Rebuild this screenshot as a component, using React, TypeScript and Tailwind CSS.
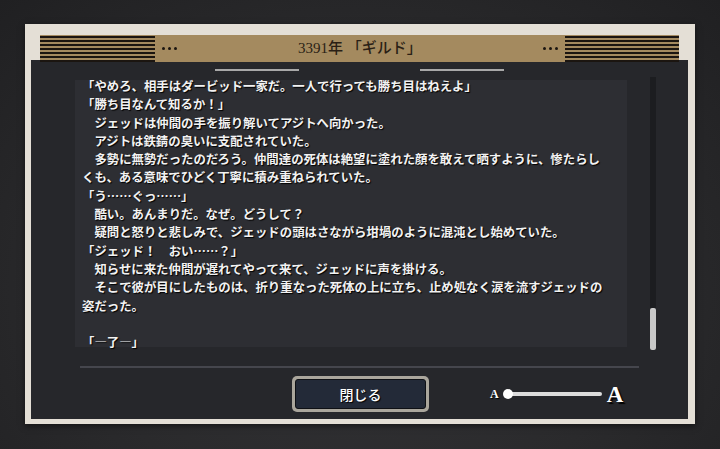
import React from "react";

const lines: string[] = [
  "「やめろ、相手はダービッド一家だ。一人で行っても勝ち目はねえよ」",
  "「勝ち目なんて知るか！」",
  "　ジェッドは仲間の手を振り解いてアジトへ向かった。",
  "　アジトは鉄錆の臭いに支配されていた。",
  "　多勢に無勢だったのだろう。仲間達の死体は絶望に塗れた顔を敢えて晒すように、惨たらし",
  "くも、ある意味でひどく丁寧に積み重ねられていた。",
  "「う……ぐっ……」",
  "　酷い。あんまりだ。なぜ。どうして？",
  "　疑問と怒りと悲しみで、ジェッドの頭はさながら坩堝のように混沌とし始めていた。",
  "「ジェッド！　おい……？」",
  "　知らせに来た仲間が遅れてやって来て、ジェッドに声を掛ける。",
  "　そこで彼が目にしたものは、折り重なった死体の上に立ち、止め処なく涙を流すジェッドの",
  "姿だった。",
  "",
  "「―了―」",
];

function Stripes({ w }: { w: string }) {
  return (
    <div className={`flex h-full flex-col gap-[2px] pt-[1px] ${w}`}>
      {[0, 1, 2, 3, 4, 5, 6].map((i) => (
        <div key={i} className="h-[2px] w-full bg-[#1b1510]" />
      ))}
    </div>
  );
}

function Dots() {
  return (
    <div className="flex items-center gap-[3px]">
      <div className="h-[3px] w-[3px] rounded-full bg-[#1b1510]" />
      <div className="h-[3px] w-[3px] rounded-full bg-[#1b1510]" />
      <div className="h-[3px] w-[3px] rounded-full bg-[#1b1510]" />
    </div>
  );
}

export default function App() {
  return (
    <div className="h-[449px] w-[720px] overflow-hidden bg-[radial-gradient(ellipse_at_50%_65%,#333336_0%,#2a2a2c_55%,#202022_100%)] pl-[25px] pt-[24px]">
      <div className="flex h-[400px] w-[670px] flex-col bg-[#e4dfd6] pb-[5px] pl-[6px] pr-[7px] pt-[11px] shadow-[0_2px_6px_rgba(0,0,0,0.5)]">
        {/* header */}
        <div className="relative z-10 mx-[9px] -mb-[2px] flex h-[27px] items-center bg-[#a48a5f]">
          <Stripes w="w-[115px]" />
          <div className="ml-[7px]">
            <Dots />
          </div>
          <div className="flex flex-1 justify-center font-['Liberation_Serif','Noto_Sans_CJK_JP',serif] text-[15px] font-medium text-[#2a1f15]">
            3391年 「ギルド」
          </div>
          <div className="mr-[7px]">
            <Dots />
          </div>
          <Stripes w="w-[114px]" />
        </div>

        {/* dark panel */}
        <div className="flex flex-1 flex-col bg-[#26272b]">
          <div className="mt-[9px] flex justify-center gap-[121px]">
            <div className="h-[2px] w-[84px] bg-[#a8a8a8]" />
            <div className="h-[2px] w-[84px] bg-[#a8a8a8]" />
          </div>

          <div className="mt-[6px] flex items-start">
            <div className="ml-[44px] mt-[3px] h-[267px] w-[552px] bg-[#2d2e33]">
              <div
                lang="ja"
                className="-mt-[3px] pl-[7px] font-['Noto_Sans_CJK_JP',sans-serif] text-[12.4px] font-bold leading-[18.3px] text-[#f2f2f2] [text-shadow:1px_1px_1px_#000]"
              >
                {lines.map((l, i) => (
                  <div key={i} className="h-[18.3px] whitespace-nowrap">
                    {l || "\u00a0"}
                  </div>
                ))}
              </div>
            </div>
            <div className="ml-[23px] flex h-[273px] w-[6px] flex-col justify-end bg-[#1c1d20]">
              <div className="h-[42px] w-full rounded-[2px] bg-[#c9c9c9]" />
            </div>
          </div>

          <div className="ml-[49px] mt-[16px] h-[2px] w-[559px] bg-[#45464d]" />

          <div className="mt-[8px] flex h-[36px] items-center">
            <div className="ml-[261px] h-[36px] w-[137px] rounded-[5px] bg-[#aaa69c] p-[3px]">
              <div className="flex h-full w-full items-center justify-center rounded-[3px] border border-[#0f1115] bg-[#232a38] font-['Noto_Sans_CJK_JP',sans-serif] text-[14px] font-medium text-white [text-shadow:1px_1px_1px_#000]">
                閉じる
              </div>
            </div>

            <div className="ml-[61px] flex items-center">
              <span className="font-['Liberation_Serif',serif] text-[12px] font-bold leading-none text-white [text-shadow:1px_1px_1px_#000]">
                A
              </span>
              <div className="relative ml-[9px] h-[4px] w-[94px] rounded-full bg-[#dcdcdc]">
                <div className="absolute -left-[5px] -top-[3px] h-[10px] w-[10px] rounded-full bg-white" />
              </div>
              <span className="ml-[5px] font-['Liberation_Serif',serif] text-[23px] font-bold leading-none text-white [text-shadow:2px_2px_1px_#000]">
                A
              </span>
            </div>
          </div>
        </div>
      </div>
    </div>
  );
}
